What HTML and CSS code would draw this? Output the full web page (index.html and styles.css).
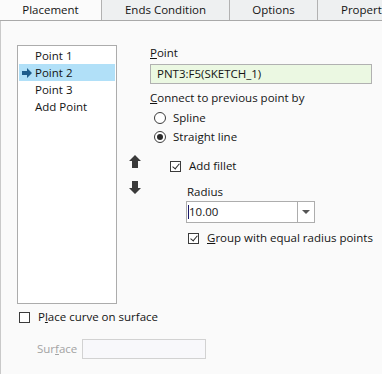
FILE: index.html
```html
<!DOCTYPE html>
<html lang="en">
<head>
  <meta charset="UTF-8" />
  <title>Placement</title>
  <link rel="stylesheet" href="styles.css">
</head>
<body>

  <!-- Tabs -->
  <div class="tabs">
    <div class="tab tab-placement active">Placement</div>
    <div class="tab tab-ends">Ends Condition</div>
    <div class="tab tab-options">Options</div>
    <div class="tab tab-props">Properties</div>
  </div>

  <div class="panel">
    <div class="main">

      <!-- Point list -->
      <div class="point-list">
        <div class="row"><span class="mark"></span>Point 1</div>
        <div class="row selected">
          <span class="mark">
            <svg width="10" height="10" viewBox="0 0 10 10"><path d="M0 3H5V0L10 5L5 10V7H0Z" fill="#1f5d8c"/></svg>
          </span>Point 2
        </div>
        <div class="row"><span class="mark"></span>Point 3</div>
        <div class="row"><span class="mark"></span>Add Point</div>
      </div>

      <!-- Move up / down -->
      <div class="movers">
        <svg width="12" height="13" viewBox="0 0 12 13"><path d="M6 0L12 6H9V13H3V6H0Z" fill="#3a3a3a"/></svg>
        <svg width="12" height="13" viewBox="0 0 12 13"><path d="M6 13L12 7H9V0H3V7H0Z" fill="#3a3a3a"/></svg>
      </div>

      <!-- Point options -->
      <div class="form">
        <div class="label"><u>P</u>oint</div>
        <div class="field point-field">PNT3:F5(SKETCH_1)</div>

        <div class="label connect"><u>C</u>onnect to previous point by</div>
        <div class="option spline"><span class="radio"></span><span>Spline</span></div>
        <div class="option straight"><span class="radio on"></span><span>Straight line</span></div>

        <div class="option fillet"><span class="check on"></span><span>Add fillet</span></div>
        <div class="label radius-label">Radius</div>
        <div class="combo">
          <div class="combo-text"><span class="caret"></span>10.00</div>
          <div class="combo-btn"></div>
        </div>
        <div class="option group"><span class="check on"></span><span><u>G</u>roup with equal radius points</span></div>
      </div>
    </div>

    <div class="option surface-check"><span class="check"></span><span>P<u>l</u>ace curve on surface</span></div>
    <div class="surface-row">
      <span class="dim">Sur<u>f</u>ace</span>
      <div class="field surface-field"></div>
    </div>
  </div>

</body>
</html>
```

FILE: styles.css
```css
* { margin: 0; padding: 0; box-sizing: border-box; }
body {
  font-family: 'Open Sans', sans-serif;
  font-size: 11.5px;
  line-height: 16px;
  color: #141414;
  background-color: #fafafa;
  width: 382px;
  height: 374px;
  overflow: hidden;
}

/* --- tabs --- */
.tabs {
  display: flex;
  height: 21px;
  border-bottom: 1px solid #a9a9a9;
  white-space: nowrap;
  overflow: hidden;
}
.tab {
  flex: none;
  height: 20px;
  line-height: 20px;
  text-align: center;
  background-color: #eef0f1;
  border-right: 1px solid #b2b2b2;
}
.tab.active { background-color: #fbfbfb; }
.tab-placement { width: 102px; }
.tab-ends { width: 128px; }
.tab-options { width: 88px; }
.tab-props { width: 80px; text-align: left; padding-left: 23px; }

/* --- panel --- */
.panel {
  border-left: 1px solid #c9c9c9;
  height: 353px;
}
.main {
  display: flex;
  padding: 24px 0 0 16px;
}
.point-list {
  width: 100px;
  height: 259px;
  background-color: #fff;
  border: 1px solid #acacac;
  padding-top: 1px;
}
.point-list .row {
  display: flex;
  align-items: center;
  height: 17px;
  margin: 0 1px;
}
.point-list .row.selected { background-color: #b1e0f8; }
.point-list .mark {
  display: flex;
  width: 13px;
  margin-left: 3px;
}

.movers {
  display: flex;
  flex-direction: column;
  gap: 13px;
  padding: 110px 0 0 12px;
}

/* --- form --- */
.form {
  margin-left: 9px;
  width: 222px;
  white-space: nowrap;
}
.label { height: 16px; }
.field {
  height: 20px;
  border: 1px solid #b1b1b1;
  line-height: 18px;
}
.point-field {
  margin-top: 3px;
  padding-left: 6px;
  background-color: #ebf8e2;
}
.connect { margin-top: 6px; }

.option {
  display: flex;
  align-items: center;
  height: 16px;
  white-space: nowrap;
}
.spline { margin-top: 4px; padding-left: 4px; }
.straight { margin-top: 3px; padding-left: 4px; }
.radio {
  flex: none;
  width: 12px;
  height: 12px;
  border: 1px solid #3b3b3b;
  border-radius: 50%;
  background-color: #fff;
  margin-right: 7px;
  display: flex;
  align-items: center;
  justify-content: center;
}
.radio.on::after {
  content: "";
  width: 6px;
  height: 6px;
  border-radius: 50%;
  background-color: #2a2a2a;
}

.check {
  flex: none;
  width: 11px;
  height: 11px;
  border: 1px solid #3b3b3b;
  background-color: #fff;
  margin-right: 8px;
  position: relative;
}
.check.on::after {
  content: "";
  position: absolute;
  left: 3px;
  top: 0px;
  width: 3px;
  height: 6px;
  border: solid #2a2a2a;
  border-width: 0 1px 1px 0;
  transform: rotate(40deg);
}

.fillet { margin-top: 13px; padding-left: 20px; }
.radius-label { margin-top: 10px; padding-left: 37px; }
.combo {
  display: flex;
  margin: 1px 0 0 36px;
  width: 129px;
  height: 22px;
  border: 1px solid #adadad;
  background-color: #fff;
}
.combo-text {
  flex: 1;
  display: flex;
  align-items: center;
  padding-left: 1px;
}
.caret {
  width: 1px;
  height: 14px;
  background-color: #1a1a6a;
}
.combo-btn {
  width: 17px;
  border-left: 1px solid #adadad;
  display: flex;
  align-items: center;
  justify-content: center;
}
.combo-btn::after {
  content: "";
  border-left: 4px solid transparent;
  border-right: 4px solid transparent;
  border-top: 4px solid #555;
}
.group { margin-top: 7px; padding-left: 38px; }

/* --- surface --- */
.surface-check { margin: 5px 0 0 18px; }
.surface-row {
  display: flex;
  align-items: center;
  margin: 14px 0 0 36px;
}
.dim { color: #a3a3a3; width: 45px; }
.surface-field {
  width: 124px;
  background-color: #f8f8fb;
  border-color: #d2d2d2;
}
```
